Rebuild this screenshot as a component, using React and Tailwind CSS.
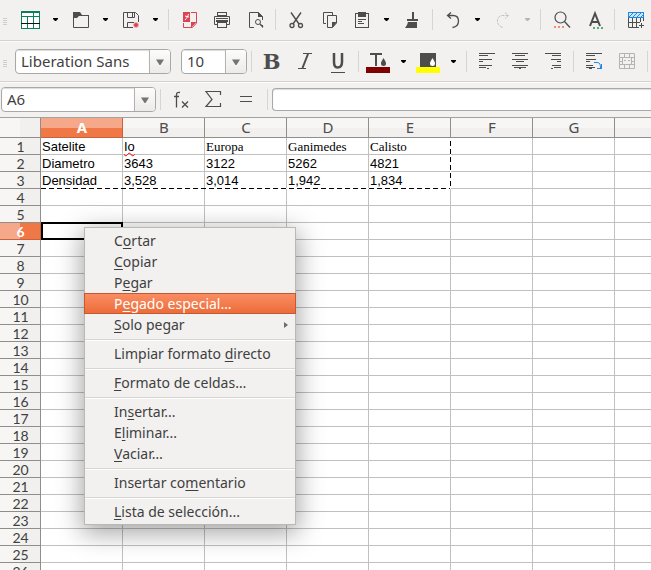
import React from "react";

const UI = "font-['Noto_Sans','Open_Sans',sans-serif]";

function Icon({ children }) {
  return (
    <svg width="25" height="25" viewBox="0 -1 25 25" fill="none" stroke="#4d4d4d" aria-hidden="true" className="shrink-0">
      {children}
    </svg>
  );
}

function Tool({ label, children }) {
  return (
    <button type="button" aria-label={label} className="flex h-[25px] w-[33px] shrink-0 items-center justify-center">
      <Icon>{children}</Icon>
    </button>
  );
}

function Drop({ label, muted }) {
  return (
    <button type="button" aria-label={label} className="flex h-[25px] w-[17px] shrink-0 items-center justify-center">
      <svg width="5" height="3" viewBox="0 0 5 3" aria-hidden="true">
        <path d="M0 0H5V1L3 3H2L0 1Z" fill={muted ? "#b5b5b5" : "#000"} />
      </svg>
    </button>
  );
}

function Sep() {
  return (
    <div className="flex w-2 shrink-0 justify-center">
      <div className="h-[21px] w-px bg-[#d6d5d2]" />
    </div>
  );
}

function Grip() {
  return (
    <div className="flex w-[14px] shrink-0 flex-col gap-px pt-1 pl-[3px]">
      <div className="h-px w-1 bg-[#cfcecb]" />
      <div className="h-px w-1 bg-[#cfcecb]" />
      <div className="h-px w-1 bg-[#cfcecb]" />
      <div className="h-px w-1 bg-[#cfcecb]" />
    </div>
  );
}

function Combo({ label, value, width }) {
  return (
    <div className={`flex h-[25px] shrink-0 overflow-hidden rounded-[4px] border border-[#a9a8a5] bg-white ${width}`}>
      <input
        type="text"
        aria-label={label}
        defaultValue={value}
        className="min-w-0 flex-1 bg-transparent px-[5px] text-[15px] text-[#3f3f3f] shadow-[inset_0_1px_1px_#dddcda] outline-none"
      />
      <button
        type="button"
        aria-label={`${label}: abrir lista`}
        className="flex w-[21px] shrink-0 items-center justify-center border-l border-[#b4b3b0] bg-linear-to-b from-[#fcfcfb] to-[#ecebe9]"
      >
        <svg width="8" height="6" viewBox="0 0 8 6" aria-hidden="true">
          <path d="M0 0.5H8L4.5 6H3.5Z" fill="#747474" />
        </svg>
      </button>
    </div>
  );
}

function StandardBar() {
  return (
    <div role="toolbar" aria-label="Estándar" className="flex h-[41px] items-center overflow-hidden border-b border-[#d3d2cf] pb-px">
      <Grip />
      <Tool label="Nuevo">
        <rect x="3.5" y="3.5" width="18" height="17" fill="#fff" stroke="#0a7f5b" />
        <path d="M3 4.5H22M3 8.5H22M9.5 8V21M15.5 4V21M3 20.5H22" stroke="#0a7f5b" />
        <path d="M3 15.5H22" stroke="#111" />
      </Tool>
      <Drop label="Más: Nuevo" />
      <Tool label="Abrir">
        <path d="M5 4H12L14 7H21V8H11L9 10H5Z" fill="#4d4d4d" stroke="none" />
        <path d="M5.5 9V19.5H20.5V7" />
      </Tool>
      <Drop label="Más: Abrir" />
      <Tool label="Guardar">
        <path d="M5.5 4.5H17.5L20.5 7.5V14M5.5 4.5V19.5H15" />
        <path d="M9.5 5V9.5H16.5V5M14.5 5V9M9.5 19V14.5H16" />
        <circle cx="18" cy="17" r="2.5" fill="#da4453" stroke="#f3b1b8" />
      </Tool>
      <Drop label="Más: Guardar" />
      <Sep />
      <Tool label="Exportar como PDF">
        <path d="M7 4H14V14H7Z" fill="#da4453" stroke="none" />
        <path d="M9 12C11 10 12 8 12.5 6M9 8L13 9" stroke="#fff" />
        <path d="M15 4.5H20.5V15L16.5 19.5H7.5V15" stroke="#da4453" />
        <path d="M15 14H20.5L15 20Z" fill="#da4453" stroke="none" />
      </Tool>
      <Tool label="Imprimir">
        <rect x="8.5" y="4.5" width="9" height="3" />
        <path d="M8.5 16.5H5.5V8.5H20.5V16.5H17.5" />
        <path d="M7 10.5H19" />
        <path d="M7 12H19V14H7Z" fill="#4d4d4d" stroke="none" />
        <rect x="8.5" y="14.5" width="9" height="5" fill="#f2f1f0" />
      </Tool>
      <Tool label="Vista previa">
        <path d="M12 19.5H7.5V4.5H16.5L20.5 8.5V12M20.5 17V19.5" />
        <path d="M16 4V9H21Z" fill="#4d4d4d" stroke="none" />
        <circle cx="16" cy="14" r="2.5" />
        <path d="M18 16L21 19" strokeWidth="1.5" />
      </Tool>
      <Sep />
      <Tool label="Cortar">
        <path d="M8 4.5L16 16M18 4.5L10 16" strokeWidth="1.4" />
        <circle cx="9" cy="17.5" r="2" strokeWidth="1.3" />
        <circle cx="17.5" cy="17.5" r="2" strokeWidth="1.3" />
      </Tool>
      <Tool label="Copiar">
        <path d="M10 15.5H7.5V4.5H16.5V7" />
        <path d="M11.5 7.5H20.5V15L16.5 19.5H11.5Z" />
        <path d="M16 14H21L16 20Z" fill="#4d4d4d" stroke="none" />
      </Tool>
      <Tool label="Pegar">
        <rect x="6.5" y="5.5" width="13" height="14" />
        <path d="M9 4H17V9H9Z" fill="#4d4d4d" stroke="none" />
        <path d="M9 11.5H17M9 13.5H13M9 15.5H15" />
      </Tool>
      <Drop label="Más: Pegar" />
      <Tool label="Clonar formato">
        <path d="M14 4V11" strokeWidth="2" />
        <path d="M8 11H19V13H8ZM9 14H18V20H6L8 17Z" fill="#4d4d4d" stroke="none" />
      </Tool>
      <Sep />
      <Tool label="Deshacer">
        <path d="M11 4.5L7.5 7.5L11 10.5M7.5 7.5H13C17 7.5 18.5 10 18.5 13C18.5 16.5 16 19 12.5 19.5" strokeWidth="1.3" />
      </Tool>
      <Drop label="Más: Deshacer" />
      <Tool label="Rehacer">
        <path d="M15 4.5L18.5 7.5L15 10.5M18.5 7.5H13C9 7.5 7.5 10 7.5 13C7.5 16.5 10 19 13 19.5" stroke="#c4c3c1" strokeDasharray="3 1" />
      </Tool>
      <Drop label="Más: Rehacer" muted />
      <Sep />
      <Tool label="Buscar y reemplazar">
        <circle cx="12.5" cy="9.5" r="5.5" strokeWidth="1.2" />
        <path d="M16.5 13.5L22 19.5" strokeWidth="1.3" />
        <path d="M6 18H8V20H6ZM10 18H12V20H10ZM14 18H16V20H14Z" fill="#ef8f79" stroke="none" />
      </Tool>
      <Tool label="Ortografía">
        <path d="M9 18L14 5.5L19 18M11 14H17" strokeWidth="2" />
        <path d="M12 19H14V21H12ZM16 19H18V21H16ZM20 19H22V21H20Z" fill="#4db082" stroke="none" />
      </Tool>
      <Sep />
      <Tool label="Fila">
        <rect x="6.5" y="4.5" width="15" height="5" fill="#cde6fa" stroke="#1e88e5" />
        <path d="M7 9L11 5M11 9L15 5M15 9L19 5M19 9L21 7" stroke="#1e88e5" />
        <path d="M6.5 10V19.5H17M6 14.5H18M10.5 10V20M14.5 10V20M18.5 10V14M21.5 10V13" />
        <path d="M19.5 15V20M17 17.5H22" />
      </Tool>
    </div>
  );
}

function FormatBar() {
  return (
    <div role="toolbar" aria-label="Formato" className="flex h-[41px] items-center overflow-hidden border-t border-b border-t-[#fbfbfa] border-b-[#d3d2cf]">
      <Grip />
      <div className="flex shrink-0 gap-[10px] pl-px">
        <Combo label="Nombre del tipo de letra" value="Liberation Sans" width="w-[156px]" />
        <Combo label="Tamaño" value="10" width="w-[66px]" />
      </div>
      <Sep />
      <button type="button" aria-label="Negrita" className="w-[33px] shrink-0 text-center font-['DejaVu_Serif',serif] text-[21px] leading-[25px] font-bold text-[#4d4d4d]">B</button>
      <Tool label="Cursiva">
        <path d="M11 3.5H20M6 18.5H14" />
        <path d="M16 4L10.5 18" strokeWidth="2" />
      </Tool>
      <Tool label="Subrayado">
        <path d="M9 3V12C9 16 10 17.5 12.5 17.5C15 17.5 17 16 17 12V3" strokeWidth="2.5" />
        <path d="M6 22.5H20" />
      </Tool>
      <Sep />
      <Tool label="Color de letra">
        <path d="M4 4H16M10 4V16" strokeWidth="2" />
        <path d="M17.5 8C19 10.5 20 12 20 13.5A2.5 2.5 0 0 1 15 13.5C15 12 16 10.5 17.5 8Z" fill="#4d4d4d" stroke="none" />
        <path d="M0 17H24V23H0Z" fill="#800000" stroke="none" />
      </Tool>
      <Drop label="Más: Color de letra" />
      <Tool label="Color de fondo">
        <path d="M4 3H20V17H4Z" fill="#4d4d4d" stroke="none" />
        <path d="M16.5 8C18 10.5 19 12 19 13.5A2.5 2.5 0 0 1 14 13.5C14 12 15 10.5 16.5 8Z" fill="#fff" stroke="none" />
        <path d="M0 17H24V23H0Z" fill="#ffff00" stroke="none" />
      </Tool>
      <Drop label="Más: Color de fondo" />
      <Sep />
      <Tool label="Alinear a la izquierda">
        <path d="M5 3.5H21M5 5.5H14M5 9.5H18M5 11.5H9M5 15.5H18M5 17.5H12M13 18.5H15" />
      </Tool>
      <Tool label="Centrar">
        <path d="M5 3.5H21M8 5.5H18M5 9.5H21M9 11.5H17M5 15.5H21M7 17.5H19M12 18.5H14" />
      </Tool>
      <Tool label="Alinear a la derecha">
        <path d="M5 3.5H21M12 5.5H21M11 9.5H21M17 11.5H21M12 15.5H21M14 17.5H21M11 18.5H13" />
      </Tool>
      <Sep />
      <Tool label="Ajustar texto">
        <path d="M5 3.5H21M5 5.5H14M5 9.5H15M5 11.5H9M5 15.5H12M5 17.5H14M8 18.5H11" />
        <path d="M13 12.5H16C19 12.5 19.5 14.5 19.5 18M16 18.5H21M20.5 14V19" stroke="#1e88e5" />
      </Tool>
      <Tool label="Combinar celdas">
        <path d="M5.5 3.5H20.5V18.5H5.5ZM5 7.5H21M5 14.5H21M10.5 3V8M15.5 3V8M10.5 14V19M15.5 14V19M5 11.5H8M18 11.5H21M8.5 8V14M10 10.5H12M14 10.5H16M17.500 8V14" stroke="#b5b4b2" />
      </Tool>
      <Sep />
    </div>
  );
}

function FormulaBar() {
  return (
    <div className="flex h-[35px] items-center border-t border-[#fbfbfa] pb-px">
      <div className="shrink-0 pl-px">
        <Combo label="Cuadro de nombre" value="A6" width="w-[155px]" />
      </div>
      <Sep />
      <Tool label="Asistente de funciones">
        <path d="M12 4.5C9.5 4 8.5 5 8.5 7V19.5M6 8.5H11" strokeWidth="1.3" />
        <path d="M14 13.5L20 19.5M20 13.5L14 19.5" strokeWidth="1.3" />
      </Tool>
      <Tool label="Suma">
        <path d="M19.5 7V3.5H5L11 11.5L5 18.5H19.5V15" strokeWidth="1.2" />
      </Tool>
      <Tool label="Fórmula">
        <path d="M6 8.5H18M6 13.5H18" />
      </Tool>
      <Sep />
      <input
        type="text"
        aria-label="Línea de entrada"
        className="ml-px h-[23px] min-w-0 flex-1 rounded-l-[4px] border border-r-0 border-[#a9a8a5] bg-white px-1 text-[15px] shadow-[inset_0_1px_1px_#dddcda] outline-none"
      />
    </div>
  );
}

const columns = ["A", "B", "C", "D", "E", "F", "G", "H"];
const data = [
  ["Satelite", "Io", "Europa", "Ganimedes", "Calisto"],
  ["Diametro", "3643", "3122", "5262", "4821"],
  ["Densidad", "3,528", "3,014", "1,942", "1,834"],
];
const rows = Array.from({ length: 26 }, (_, i) => i + 1);

function cellFont(r, c) {
  return r === 0 && c >= 2
    ? "font-['Liberation_Serif',serif]"
    : "font-['Liberation_Sans',sans-serif]";
}

function Sheet() {
  return (
    <table className="w-[697px] min-w-full table-fixed border-separate border-spacing-0">
      <colgroup>
        <col className="w-[41px]" />
        {columns.map((c) => (
          <col key={c} className="w-[82px]" />
        ))}
      </colgroup>
      <thead>
        <tr>
          <td className="h-5 border-r border-b border-[#8f8e8b] bg-linear-to-r from-[#f7f6f4] from-50% to-[#f1f0ee] to-50%" />
          {columns.map((c) => (
            <th
              key={c}
              scope="col"
              className={`h-5 border-r border-b p-0 pl-px text-[15px] leading-[19px] ${
                c === "A"
                  ? "border-[#c9623c] bg-linear-to-b from-[#f6a88b] from-50% to-[#f07746] to-50% font-bold text-white"
                  : "border-[#8f8e8b] bg-linear-to-b from-[#f7f6f4] from-50% to-[#f1f0ee] to-50% font-normal text-[#4c4c4c]"
              }`}
            >
              {c}
            </th>
          ))}
        </tr>
      </thead>
      <tbody>
        {rows.map((n, r) => (
          <tr key={n}>
            <th
              scope="row"
              className={`h-[17px] border-r border-b p-0 pt-px pl-px font-['Lato','Noto_Sans',sans-serif] text-[14px] leading-[15px] ${
                n === 6
                  ? "border-[#c9623c] bg-linear-to-r from-[#f6a88b] from-50% to-[#f07746] to-50% font-bold text-white"
                  : "border-[#8f8e8b] bg-linear-to-r from-[#f7f6f4] from-50% to-[#f1f0ee] to-50% font-normal text-[#3f3f3f]"
              }`}
            >
              {n}
            </th>
            {columns.map((c, i) => {
              const text = data[r]?.[i];
              return (
                <td
                  key={c}
                  className={`h-[17px] border-r border-b border-[#c0c0c0] bg-white p-0 pt-px pl-px text-[13px] leading-[15px] whitespace-nowrap text-black ${cellFont(r, i)}`}
                >
                  {text === "Io" ? (
                    <span className="underline decoration-[#ff0000] decoration-wavy decoration-1 underline-offset-1">Io</span>
                  ) : (
                    text
                  )}
                </td>
              );
            })}
          </tr>
        ))}
      </tbody>
    </table>
  );
}

const menu = [
  [["C", "o", "rtar"], ["", "C", "opiar"], ["P", "e", "gar"], ["P", "e", "gado especial…"], ["", "S", "olo pegar"]],
  [["Limpiar formato ", "d", "irecto"]],
  [["", "F", "ormato de celdas…"]],
  [["In", "s", "ertar..."], ["E", "l", "iminar..."], ["", "V", "aciar…"]],
  [["Insertar co", "m", "entario"]],
  [["", "L", "ista de selección..."]],
];

function ContextMenu() {
  return (
    <div
      role="menu"
      className="absolute top-[109px] left-[84px] w-[212px] border border-[#b9b8b5] bg-[#f2f1f0] py-0.5 shadow-[0_6px_24px_2px_rgba(0,0,0,0.36)]"
    >
      {menu.map((group, g) => (
        <div key={g} role="group">
          {g > 0 && (
            <div role="separator" className="flex h-2 flex-col pt-1">
              <div className="h-px bg-[#d6d5d2]" />
              <div className="h-px bg-white" />
            </div>
          )}
          {group.map(([before, key, after]) => {
            const active = after.startsWith("gado");
            return (
              <button
                key={before + key + after}
                type="button"
                role="menuitem"
                className={`-mx-px flex h-[21px] w-[212px] items-center justify-between border pr-[7px] pl-[29px] text-[14px] leading-[19px] whitespace-pre ${
                  active
                    ? "border-[#c4582f] bg-linear-to-b from-[#f98d62] to-[#ec6c39] text-white"
                    : "border-transparent text-[#3f3f3f]"
                }`}
              >
                <span>
                  {before}
                  <span className="underline decoration-1 underline-offset-2 [text-decoration-skip-ink:none]">{key}</span>
                  {after}
                </span>
                {key === "S" && (
                  <svg width="4" height="6" viewBox="0 0 4 6" aria-hidden="true">
                    <path d="M0 0L4 3L0 6Z" fill="#6b6b6b" />
                  </svg>
                )}
              </button>
            );
          })}
        </div>
      ))}
    </div>
  );
}

export default function App() {
  return (
    <div className={`flex h-screen flex-col overflow-hidden bg-[#f2f1f0] ${UI}`}>
      <header className="shrink-0">
        <StandardBar />
        <FormatBar />
        <FormulaBar />
      </header>
      <main className="relative min-h-0 flex-1 overflow-hidden border-t border-[#a3a29f] bg-white">
        <Sheet />
        {/* Marching-ants border round the copied range */}
        <div className="absolute top-[70px] left-[41px] h-px w-[410px] bg-[repeating-linear-gradient(90deg,#000_0_5px,#fff_5px_8px)]" />
        <div className="absolute top-5 left-[450px] h-[51px] w-px bg-[repeating-linear-gradient(180deg,#fff_0_3px,#000_3px_8px)]" />
        {/* Cell cursor */}
        <div className="absolute top-[104px] left-[41px] h-[18px] w-[82px] border-2 border-black" />
        <ContextMenu />
      </main>
    </div>
  );
}
